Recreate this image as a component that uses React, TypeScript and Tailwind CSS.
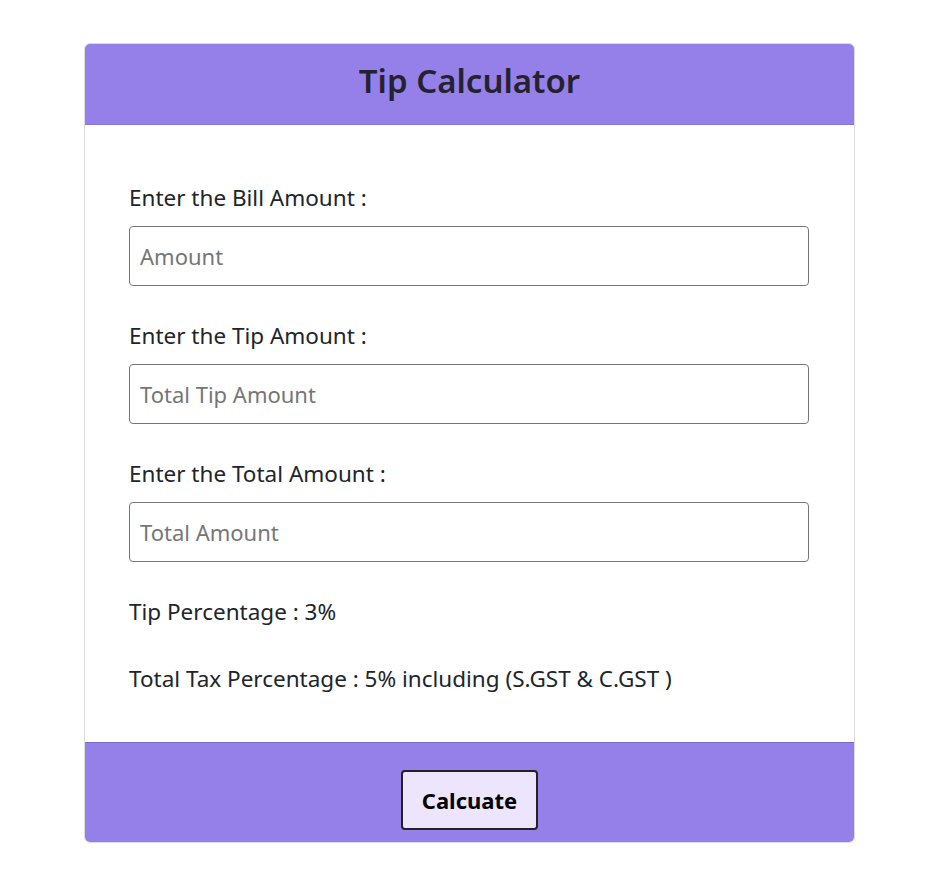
export default function App() {
  return (
    <div className="min-h-screen bg-white pt-[43px] font-['Noto_Sans',sans-serif]">
      <div className="ml-[84px] w-[771px] overflow-hidden rounded-md border border-[#dcdcdc] bg-white">
        {/* header */}
        <div className="flex h-[81px] items-center justify-center border-b border-[#8a75d8] bg-[#9580ea] pb-[7px]">
          <h1 className="text-[33px] font-semibold text-[#25222f]">Tip Calculator</h1>
        </div>

        {/* body */}
        <div className="px-[44px] pt-[58px] pb-[48px] text-[22.5px] text-[#212529]">
          <label className="mb-[13px] block leading-[30px]">Enter the Bill Amount :</label>
          <input
            className="mb-[35px] block h-[60px] w-[680px] rounded-[4px] border border-[#767676] px-[10px] text-[22px] placeholder-[#767676] outline-none"
            placeholder="Amount"
          />
          <label className="mb-[13px] block leading-[30px]">Enter the Tip Amount :</label>
          <input
            className="mb-[35px] block h-[60px] w-[680px] rounded-[4px] border border-[#767676] px-[10px] text-[22px] placeholder-[#767676] outline-none"
            placeholder="Total Tip Amount"
          />
          <label className="mb-[13px] block leading-[30px]">Enter the Total Amount :</label>
          <input
            className="mb-[35px] block h-[60px] w-[680px] rounded-[4px] border border-[#767676] px-[10px] text-[22px] placeholder-[#767676] outline-none"
            placeholder="Total Amount"
          />
          <p className="mb-[37px] leading-[30px]">Tip Percentage : 3%</p>
          <p className="leading-[30px]">Total Tax Percentage : 5% including (S.GST &amp; C.GST )</p>
        </div>

        {/* footer */}
        <div className="flex h-[100px] justify-center border-t border-[#7b68c8] bg-[#9580ea] pt-[27px]">
          <button className="h-[60px] w-[137px] rounded-[4px] border-2 border-[#222] bg-[#ede5fe] text-[22px] font-bold text-black">
            Calcuate
          </button>
        </div>
      </div>
    </div>
  );
}
